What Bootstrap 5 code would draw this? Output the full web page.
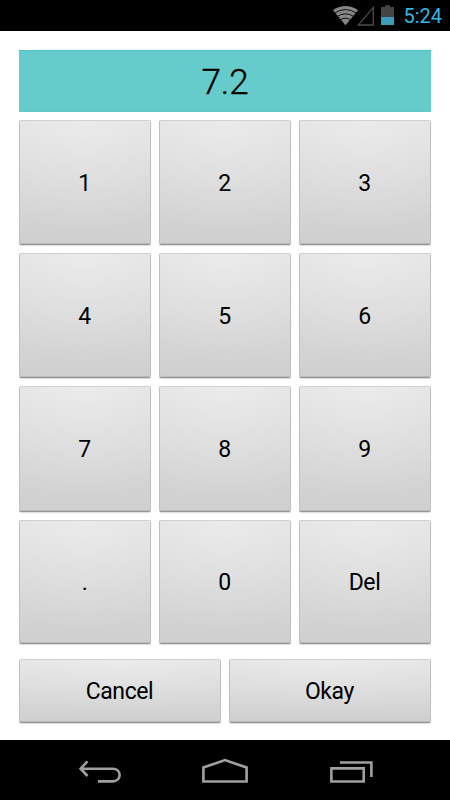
<!DOCTYPE html>
<html lang="en">
<head>
<meta charset="utf-8">
<meta name="viewport" content="width=device-width, initial-scale=1">
<title>Number entry</title>
<link href="https://cdn.jsdelivr.net/npm/bootstrap@5.3.0/dist/css/bootstrap.min.css" rel="stylesheet">
<style>
  body { font-family: Roboto, "Liberation Sans", sans-serif; height: 800px; overflow: hidden; }
  .status { height: 31px; padding-right: 8px; }
  .clock { color: #33b5e5; font-size: 20px; line-height: 31px; margin-left: 8px; padding-top: 2px; }
  .pad { padding: 19px 19px 17px; }
  .readout { height: 62px; margin-bottom: 8px; background: #66cccb; border-top: 1px solid #48c5c2; border-bottom: 1px solid #5fc9c5; color: #000; font-size: 35px; font-weight: 300; -webkit-text-stroke: .35px #000; line-height: 1; padding-top: 2px; }
  .keys { display: grid; grid-template-columns: repeat(3, 1fr); grid-template-rows: 125px 125px 126px 124px; gap: 8px; }
  .actions { height: 64px; gap: 8px; margin-top: 15px; }
  .key {
    --bs-btn-color: #000; --bs-btn-hover-color: #000; --bs-btn-active-color: #000;
    --bs-btn-border-radius: 2px; --bs-btn-font-size: 23px; --bs-btn-line-height: 1;
    --bs-btn-padding-x: 0; --bs-btn-padding-y: 0;
    letter-spacing: -.4px; padding-right: 1px; padding-top: 1px;
    border: 1px solid #c0c0c0; border-top-color: #d0d0d0; border-bottom-color: #949494;
    background: radial-gradient(ellipse 100% 90% at 50% 0, rgba(255,255,255,.32), rgba(255,255,255,0)) padding-box, linear-gradient(#e2e2e2, #cfcfcf) padding-box;
    box-shadow: inset 0 -1px 0 #bcbcbc, 0 1px 1px rgba(0,0,0,.14);
  }
  .sysnav { height: 60px; }
</style>
<script src="https://cdn.jsdelivr.net/npm/bootstrap@5.3.0/dist/js/bootstrap.bundle.min.js" defer></script>
</head>
<body class="bg-white d-flex flex-column">
<header class="status bg-black d-flex align-items-center justify-content-end flex-shrink-0">
  <svg width="64" height="31" viewBox="332 0 64 31" aria-hidden="true">
    <path d="M334 10.2Q346.5 1.9 359 10.2L346.5 25.3Z" fill="#868686"/>
    <g fill="none" stroke="#111" stroke-width="1">
      <path d="M335.3 13.2Q346.5 5.9 357.7 13.2"/>
      <path d="M338 16.6Q346.5 11 355 16.6"/>
      <path d="M341 20Q346.5 16.3 352 20"/>
    </g>
    <path d="M374.3 7.4V25H359.3Z" fill="none" stroke="#4c4c4c" stroke-width="1.3"/>
    <path d="M382 7h4V5.3h5V7h4v10h-13z" fill="#444"/>
    <path d="M382 17h13v8h-13z" fill="#3c9abd"/>
  </svg>
  <span class="clock">5:24</span>
</header>

<main class="pad flex-grow-1 d-flex flex-column">
  <div class="readout d-flex align-items-center justify-content-center">7.2</div>
  <div class="keys">
    <button type="button" class="btn key">1</button>
    <button type="button" class="btn key">2</button>
    <button type="button" class="btn key">3</button>
    <button type="button" class="btn key">4</button>
    <button type="button" class="btn key">5</button>
    <button type="button" class="btn key">6</button>
    <button type="button" class="btn key">7</button>
    <button type="button" class="btn key">8</button>
    <button type="button" class="btn key">9</button>
    <button type="button" class="btn key">.</button>
    <button type="button" class="btn key">0</button>
    <button type="button" class="btn key">Del</button>
  </div>
  <div class="actions d-flex">
    <button type="button" class="btn key flex-fill w-50">Cancel</button>
    <button type="button" class="btn key flex-fill w-50">Okay</button>
  </div>
</main>

<nav class="sysnav bg-black flex-shrink-0" aria-label="System">
  <svg class="d-block" width="450" height="60" viewBox="0 740 450 60" fill="none" stroke="#a0a0a0" stroke-width="2.6" aria-hidden="true">
    <path d="M81 768.7H112.5C122 768.7 122 781.4 112.5 781.4H98M87.5 761.3L80.6 768.7L87.5 776"/>
    <path d="M203.4 781.5V767.5L225 760.1L246.6 767.5V781.5Z"/>
    <path d="M331.4 768.4H363.7V781.5H331.4ZM340 762.5H371.4V777"/>
  </svg>
</nav>
</body>
</html>
